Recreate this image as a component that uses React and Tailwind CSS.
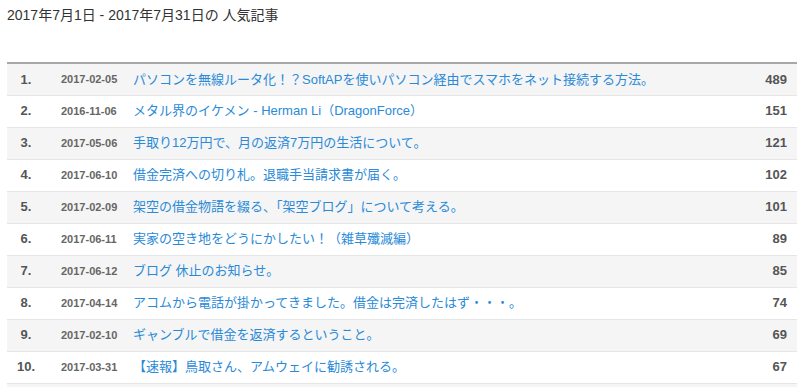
const ROWS = [
  { date: '2017-02-05', title: 'パソコンを無線ルータ化！？SoftAPを使いパソコン経由でスマホをネット接続する方法。', count: 489 },
  { date: '2016-11-06', title: 'メタル界のイケメン - Herman Li（DragonForce）', count: 151 },
  { date: '2017-05-06', title: '手取り12万円で、月の返済7万円の生活について。', count: 121 },
  { date: '2017-06-10', title: '借金完済への切り札。退職手当請求書が届く。', count: 102 },
  { date: '2017-02-09', title: '架空の借金物語を綴る、「架空ブログ」について考える。', count: 101 },
  { date: '2017-06-11', title: '実家の空き地をどうにかしたい！（雑草殲滅編）', count: 89 },
  { date: '2017-06-12', title: 'ブログ 休止のお知らせ。', count: 85 },
  { date: '2017-04-14', title: 'アコムから電話が掛かってきました。借金は完済したはず・・・。', count: 74 },
  { date: '2017-02-10', title: 'ギャンブルで借金を返済するということ。', count: 69 },
  { date: '2017-03-31', title: '【速報】鳥取さん、アムウェイに勧誘される。', count: 67 },
]

export default function App() {
  return (
    <div
      className="w-[806px] h-[387px] bg-white overflow-hidden px-[7px] pt-[6px]"
      style={{ fontFamily: '"Liberation Sans", "Noto Sans CJK JP", sans-serif' }}
    >
      <h1 className="text-[14px] leading-[18px] text-[#333] font-normal">
        2017年7月1日 - 2017年7月31日の 人気記事
      </h1>

      {/* Ranking table */}
      <table className="mt-[38px] w-[790px] border-collapse border-t-2 border-[#a8a8a8]">
        <tbody>
          {ROWS.map((row, i) => (
            <tr
              key={i}
              className={`h-[32px] border-b border-[#e6e6e6] ${i % 2 === 0 ? 'bg-[#f5f5f5]' : 'bg-white'}`}
            >
              <td className="w-[38px] text-center text-[13px] font-bold text-[#555]">{i + 1}.</td>
              <td className="w-[88px] pl-[16px] text-[11px] font-bold text-[#666]">{row.date}</td>
              <td className="text-[13px] text-[#2a8ad8]">{row.title}</td>
              <td className="pr-[10px] text-right text-[13px] font-bold text-[#555]">{row.count}</td>
            </tr>
          ))}
          <tr className="h-[32px] bg-[#f5f5f5]">
            <td colSpan={4}></td>
          </tr>
        </tbody>
      </table>
    </div>
  )
}
